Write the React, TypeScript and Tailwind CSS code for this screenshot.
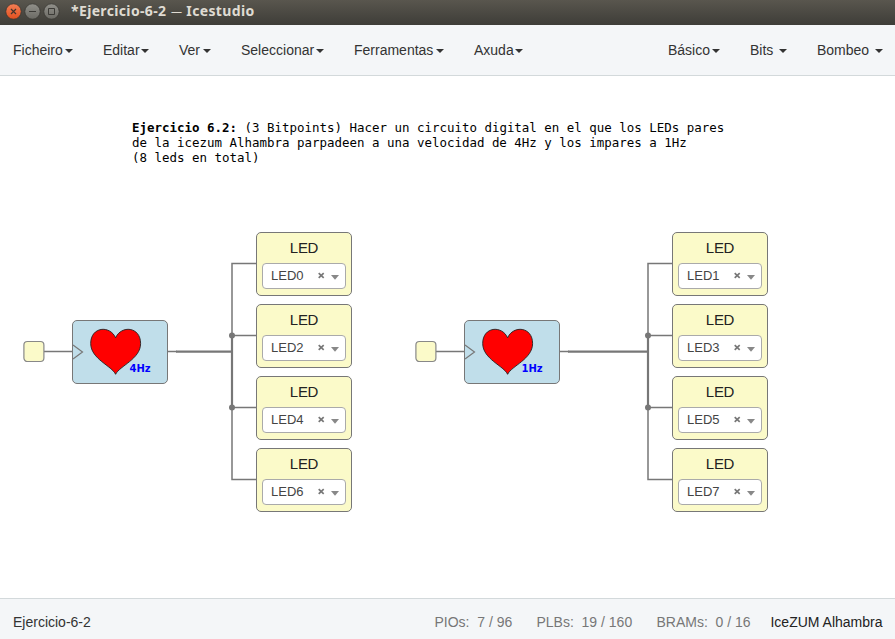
const SANS = "font-['Liberation_Sans',Arial,sans-serif]";

function Caret() {
  return <svg width="8" height="4" viewBox="0 0 8 4" className="block shrink-0"><path d="M0 0H8L4 4Z" fill="#333" /></svg>;
}

function MenuItem({ label, className }: { label: string; className: string }) {
  return (
    <button className={`flex items-center justify-between whitespace-nowrap ${className}`}>
      <span>{label}</span>
      <span className="pt-[2px]"><Caret /></span>
    </button>
  );
}

function TitleBar() {
  return (
    <header className="flex h-[25px] shrink-0 items-center bg-linear-to-b from-[#59564e] to-[#3e3d38] pb-[3px] pl-[5px]">
      <svg width="56" height="18" viewBox="0 0 56 18" className="shrink-0" fill="none">
        <defs>
          <linearGradient id="close" x2="0" y2="1"><stop stopColor="#f47f55" /><stop offset="1" stopColor="#e2501f" /></linearGradient>
          <linearGradient id="gray" x2="0" y2="1"><stop stopColor="#91908a" /><stop offset="1" stopColor="#6b6a64" /></linearGradient>
        </defs>
        <circle cx="8.5" cy="9.5" r="7.7" fill="url(#close)" stroke="#35342f" strokeWidth=".7" />
        <circle cx="27.5" cy="9.5" r="7.7" fill="url(#gray)" stroke="#35342f" strokeWidth=".7" />
        <circle cx="46.5" cy="9.5" r="7.7" fill="url(#gray)" stroke="#35342f" strokeWidth=".7" />
        <path d="M6 7L11 12M11 7L6 12" stroke="#44342c" strokeWidth="1.2" />
        <path d="M24 9.5H31M43.5 6.5H49.5V12.5H43.5Z" stroke="#3c3b37" />
      </svg>
      <h1 className="ml-[10px] flex items-center whitespace-pre font-['Noto_Sans',sans-serif] text-[14px] leading-5 font-bold tracking-[0.35px] text-[#dfdbd2]">
        <span>*Ejercicio-6-2 </span><span className="w-[12px] text-center text-[11px] font-normal tracking-normal">—</span><span> Icestudio</span>
      </h1>
    </header>
  );
}

function LedBlock({ pin }: { pin: string }) {
  return (
    <div className="h-16 w-24 rounded-[5px] border border-[#777] bg-[#fbfac9] px-[5px]">
      <div className="h-[30px] text-center text-[15px] leading-[30px] tracking-[-0.3px] text-[#222]">LED</div>
      <div className="flex h-[26px] items-center rounded-[4px] border border-[#aaa] bg-white pl-2 text-[13px] text-[#444]">
        <span className="w-[46px] leading-6">{pin}</span>
        <svg width="24" height="10" viewBox="0 0 24 10">
          <path d="M1.7 2.2L6.7 6.8M6.7 2.2L1.7 6.8" stroke="#777" strokeWidth="1.7" />
          <path d="M14 4H22L18 8.7Z" fill="#888" />
        </svg>
      </div>
    </div>
  );
}

function Wires({ bus }: { bus: number }) {
  return (
    <svg className="absolute left-0 top-0" width="360" height="300" fill="none" stroke="#777">
      <path d="M20 120.5H49M144 120.5H153" strokeWidth="1.4" />
      <path d={`M152 120.6H${bus + 0.8}`} strokeWidth="2.2" />
      <path d={`M${bus + 24} 32.5H${bus}V104`} strokeWidth="1.5" />
      <path d={`M${bus} 104V176`} strokeWidth="2.2" />
      <path d={`M${bus} 176V248.5H${bus + 24}M${bus} 104.5H${bus + 24}M${bus} 176.5H${bus + 24}`} strokeWidth="1.5" />
      <circle cx={bus} cy="104.4" r="3" fill="#777" stroke="none" />
      <circle cx={bus} cy="176.4" r="3" fill="#777" stroke="none" />
    </svg>
  );
}

function Circuit({ rate, pins, bus, className, ledsClass }: { rate: string; pins: string[]; bus: number; className: string; ledsClass: string }) {
  return (
    <section className={`absolute top-[155px] h-[300px] w-[360px] ${className}`}>
      <Wires bus={bus} />
      <svg className="absolute -left-1 top-[109px]" width="28" height="24" viewBox="0 0 28 24">
        <rect x="3.9" y="1.5" width="20" height="20" rx="3.5" fill="#fbfac9" stroke="#888" strokeWidth="1.2" />
      </svg>
      <div className="absolute left-12 top-[89px] h-16 w-24 rounded-[5px] border border-[#777] bg-[#c0deea]">
        <svg width="94" height="62" viewBox="0 0 94 62" fill="none">
          <path d="M0 24L9.5 31L0 38" stroke="#777" strokeWidth="1.2" />
          <path d="M42.6 53.3C39 45 17.7 38 17.7 22.5C17.7 5.5 37 4 42.6 16.8C48.2 4 67.6 5.5 67.6 22.5C67.6 38 46.5 45 42.6 53.3Z" fill="red" stroke="#222" strokeWidth=".9" />
        </svg>
        <span className="absolute left-[56.5px] top-[39.5px] font-['DejaVu_Sans',sans-serif] text-[10px] leading-4 font-bold text-[#00f]">{rate}</span>
      </div>
      <div className={`absolute top-[1px] flex flex-col gap-2 ${ledsClass}`}>
        {pins.map((pin) => <LedBlock key={pin} pin={pin} />)}
      </div>
    </section>
  );
}

export default function App() {
  return (
    <div className={`flex h-[639px] w-[895px] flex-col overflow-hidden bg-white text-[14px] text-[#333] ${SANS}`}>
      <TitleBar />
      <nav className="flex h-[51px] shrink-0 items-center justify-between border-b border-[#d3d9db] bg-[#f4f6f8] pr-3 pl-[13px]">
        <div className="flex gap-[30px]">
          <MenuItem label="Ficheiro" className="w-[60px]" />
          <MenuItem label="Editar" className="w-[46px]" />
          <MenuItem label="Ver" className="w-[32px]" />
          <MenuItem label="Seleccionar" className="w-[83px]" />
          <MenuItem label="Ferramentas" className="w-[90px]" />
          <MenuItem label="Axuda" className="w-[49px]" />
        </div>
        <div className="flex gap-[30px]">
          <MenuItem label="Básico" className="w-[52px]" />
          <MenuItem label="Bits" className="w-[37px]" />
          <MenuItem label="Bombeo" className="w-[66px]" />
        </div>
      </nav>
      <main className="relative min-h-0 flex-1">
        <div className="pt-[44px] pl-[132px] whitespace-pre font-['DejaVu_Sans_Mono',monospace] text-[12.46px] leading-[15px] text-black">
          <p><b>Ejercicio 6.2:</b> (3 Bitpoints) Hacer un circuito digital en el que los LEDs pares</p>
          <p>de la icezum Alhambra parpadeen a una velocidad de 4Hz y los impares a 1Hz</p>
          <p>(8 leds en total)</p>
        </div>
        <Circuit rate="4Hz" pins={["LED0", "LED2", "LED4", "LED6"]} bus={208} className="left-6" ledsClass="left-[232px]" />
        <Circuit rate="1Hz" pins={["LED1", "LED3", "LED5", "LED7"]} bus={232} className="left-[416px]" ledsClass="left-[256px]" />
      </main>
      <footer className="flex h-[41px] shrink-0 items-center justify-between border-t border-[#d3d9db] bg-[#f4f6f8] pt-[6px] pr-[12.5px] pl-[13px]">
        <span>Ejercicio-6-2</span>
        <div className="flex whitespace-pre text-[#777]">
          <span className="w-[102px]">PIOs:  7 / 96</span>
          <span className="w-[120px]">PLBs:  19 / 160</span>
          <span className="w-[114px]">BRAMs:  0 / 16</span>
          <span className="text-[#222]">IceZUM Alhambra</span>
        </div>
      </footer>
    </div>
  );
}
